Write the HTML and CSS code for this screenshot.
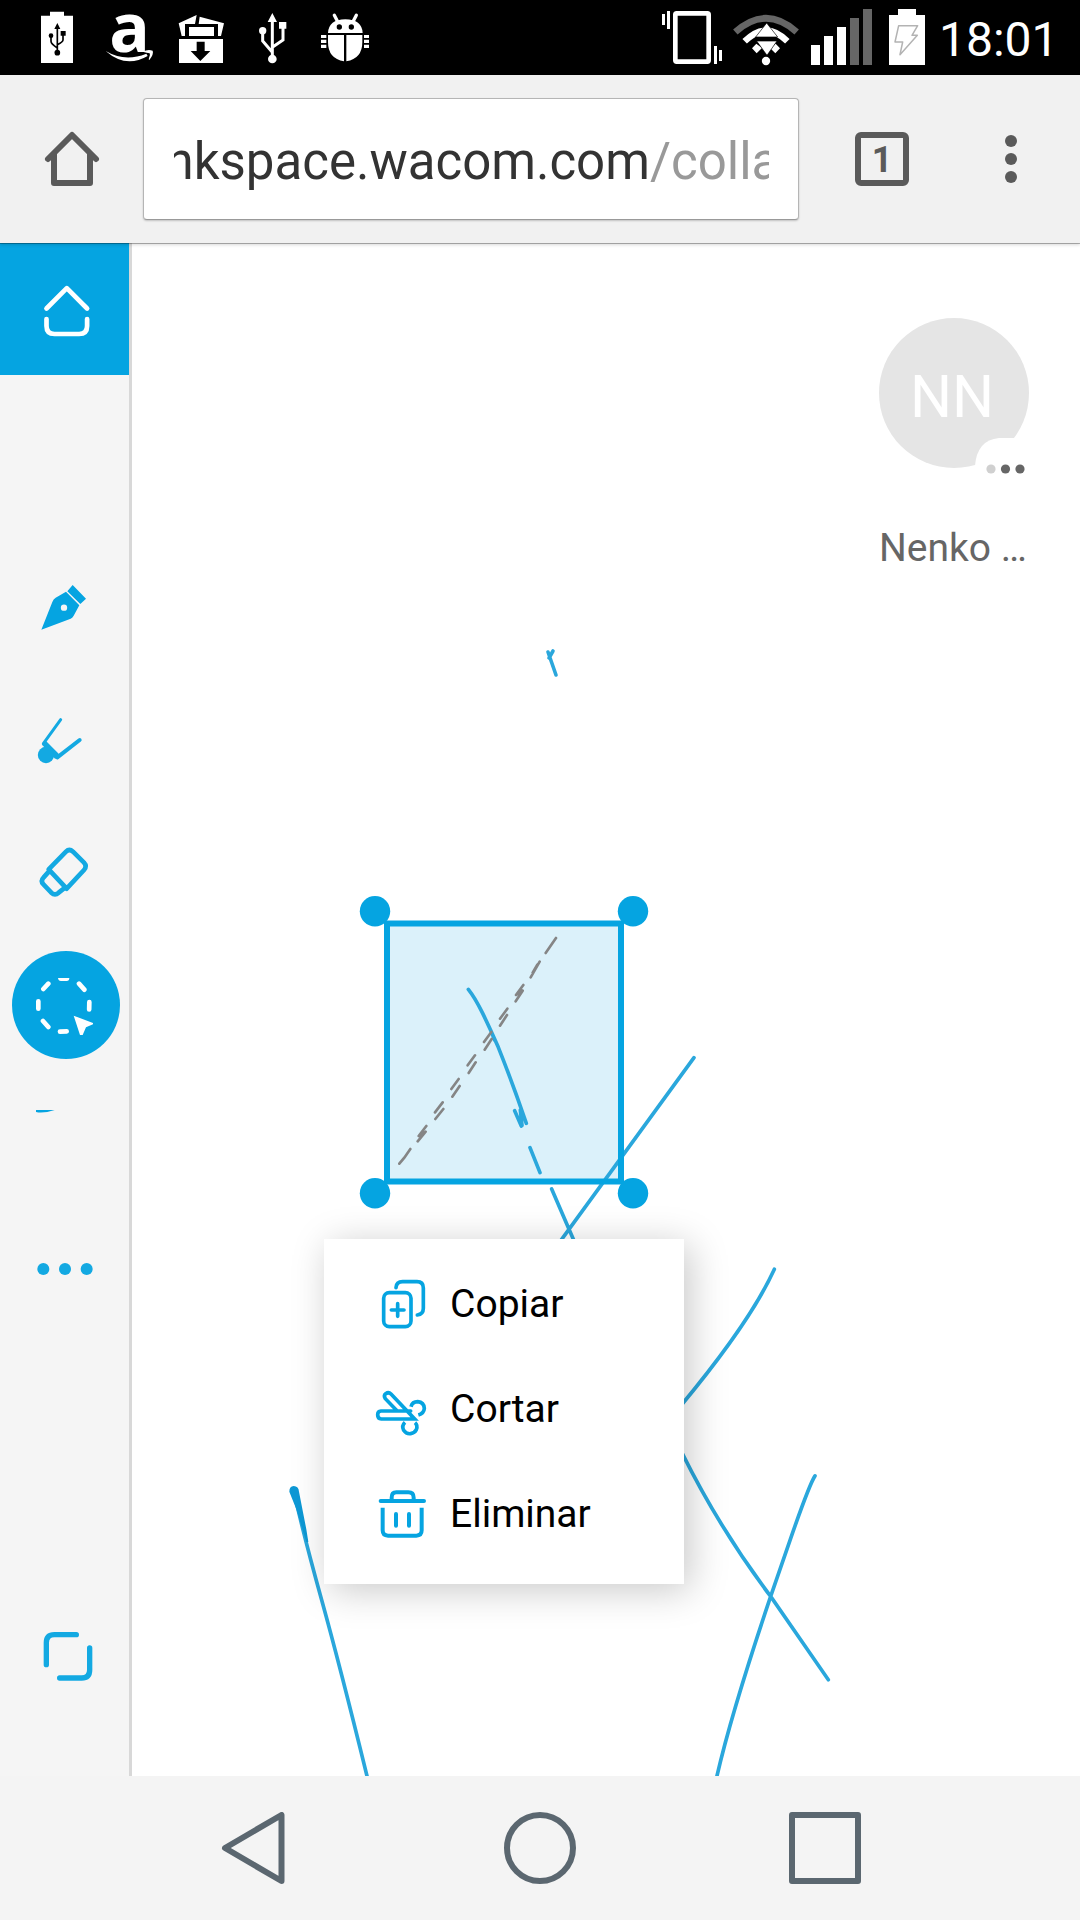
FILE: index.html
```html
<!DOCTYPE html>
<html lang="es">
<head>
<meta charset="utf-8">
<title>Inkspace</title>
<link rel="stylesheet" href="styles.css">
</head>
<body>
<div class="phone">
  <header class="status">
    <div class="status-left">
      <svg width="54" height="75" viewBox="108 0 162 225"><path fill="#fff" d="M123 47h27V35h42v12h27v142h-96z"/><g stroke="#000" stroke-width="5" fill="none"><path d="M172 85v75M153 110v14q0 8 19 20M189 104v16q0 6-17 14"/></g><path d="M172 69l9 18h-18zM182 93h15v14h-15z"/><circle cx="153" cy="107" r="7"/><circle cx="172" cy="158" r="8.500"/></svg>
      <svg width="75" height="75" viewBox="270 0 225 225"><text class="logo-letter" x="328" y="155">a</text><path fill="#fff" d="M317 153q57 34 122 8l4 7q-66 38-126-15zM428 155q16-8 30-3 4 10-10 28-3 0-1-6 5-8 2-14-8-2-21-5z"/></svg>
      <svg width="75" height="75" viewBox="495 0 225 225" fill="#fff"><path d="M537 117h132v72H537z"/><path d="M536 70l54-25-5 27h-30v36h-10zM599 50l73 20-9 38h-9V72h-58zM567 81h75v27h-75z"/><path fill="#000" d="M590 125h24v28h17l-30 30-29-30h18z"/></svg>
      <svg width="65" height="75" viewBox="720 0 195 225"><g stroke="#fff" stroke-width="9" fill="none"><path d="M817 58v120M788 95v28l29 34M849 80v40l-32 22"/></g><g fill="#fff"><path d="M817 39l14 27h-28zM837 66h22v20h-22z"/><circle cx="788" cy="92" r="11"/><circle cx="817" cy="177" r="13"/></g></svg>
      <svg width="75" height="75" viewBox="915 0 225 225"><g fill="#fff"><path d="M984 99q2-40 52-41 50 1 52 41zM984 105h48v79q-48-8-48-58zM1039 105h48v21q0 50-48 58zM963 105h16v9h-16zM963 119h16v10h-16zM963 134h16v10h-16zM1092 105h15v9h-15zM1092 119h15v10h-15zM1092 134h15v10h-15z"/></g><path d="M1003 46l9 17M1069 46l-9 17" stroke="#fff" stroke-width="10" stroke-linecap="round"/><circle cx="1018" cy="81" r="8"/><circle cx="1054" cy="81" r="8"/></svg>
    </div>
    <div class="status-right">
      <svg width="72" height="75" viewBox="45 0 216 225"><rect x="106" y="40" width="100" height="145" rx="4" fill="none" stroke="#fff" stroke-width="14"/><path fill="#fff" d="M66 42h9v33h-9zM81 33h9v54h-9zM222 138h9v54h-9zM237 150h9v33h-9z"/></svg>
      <svg width="78" height="75" viewBox="261 0 234 225"><path d="M286 96q92-82 184 0" fill="none" stroke="#666" stroke-width="20"/><path d="M314 124q64-64 128 0" fill="none" stroke="#fff" stroke-width="19"/><g fill="#fff"><path d="M336 145l13-14 17 13-16 16zM420 145l-13-14-17 13 16 16z"/><circle cx="378" cy="183" r="12.500"/></g><path d="M380 69l33 42h-66zM350 123h61l-30 43z" fill="#fff" stroke="#000" stroke-width="2"/></svg>
      <svg width="75" height="75" viewBox="495 0 225 225"><path fill="#fff" d="M513 135h27v60h-27zM552 108h27v87h-27zM591 81h27v114h-27z"/><path fill="#666" d="M630 54h27v141h-27zM669 27h27v168h-27z"/></svg>
      <svg width="57" height="75" viewBox="720 0 171 225"><path fill="#fff" d="M747 45h27V27h54v18h27v150H747z"/><path d="M776 77h57l-17 29h16l-52 58 8-38h-23z" fill="none" stroke="#b3b3b3" stroke-width="4.500" stroke-linejoin="round"/></svg>
      <span class="clock">18:01</span>
    </div>
  </header>

  <div class="toolbar">
    <svg class="home" width="60" height="60" viewBox="42 129 60 60" fill="none" stroke="#5a5a5a" stroke-width="6" stroke-linecap="round" stroke-linejoin="round"><path d="M48 159l24-24 24 24M54 154v29h36v-29"/></svg>
    <div class="omnibox"><div class="url"><span class="url-text">nkspace.wacom.com<span class="url-path">/colla</span></span></div></div>
    <div class="tabs">1</div>
    <svg class="kebab" width="12" height="48" viewBox="0 0 12 48" fill="#5a5a5a"><circle cx="6" cy="6" r="6"/><circle cx="6" cy="24" r="6"/><circle cx="6" cy="42" r="6"/></svg>
  </div>

  <main class="workspace">
    <aside class="sidebar">
      <div class="home-tile"><svg width="129" height="132" viewBox="0 243 129 132" fill="none" stroke="#fff" stroke-width="4.700" stroke-linecap="round" stroke-linejoin="round"><path d="M46.500 308.500l20.300-20.300 20.300 20.300M46.500 319v7q0 8 8 8h24.600q8 0 8-8v-7"/></svg></div>
      <div class="tools">
        <svg width="129" height="132" viewBox="0 -57 387 396"><path fill="#05a4e1" d="M124 209l33-83q3-9 10-13l31-18 40 41-17 31q-3 6-9 9zM202 94l16-19 40 41-17 16z"/><circle cx="192" cy="143" r="9.500" fill="#f5f5f5"/></svg>
        <svg width="129" height="132" viewBox="0 339 387 396"><g stroke="#13a9e2" stroke-linecap="round" stroke-linejoin="round" fill="none"><path stroke-width="9" d="M182 479l-52 72"/><path stroke-width="12" d="M172 592l67-52"/></g><path fill="#13a9e2" d="M126 554l12-11 38 38 1 14-12 1z"/><circle cx="138" cy="585" r="24.500" fill="#13a9e2"/></svg>
        <svg width="129" height="132" viewBox="0 735 387 396"><g fill="none" stroke="#13a9e2" stroke-width="14" stroke-linejoin="round"><path d="M146 928l52-53q10-10 21 0l33 33q10 11 0 22l-52 56zM149 932l-18 20q-11 11 0 22l23 24q11 10 22 0l19-15"/></g></svg>
        <svg width="129" height="132" viewBox="0 21 387 396"><circle cx="198" cy="225" r="162" fill="#05a4e1"/><g stroke="#fff" stroke-width="14" stroke-linecap="round" fill="none"><path d="M115 214v22M268 216l-.500 22M237 161l16 18M145 161l-15 16M129 273l16 18M180 305l20-1"/></g><path fill="#fff" d="M174 144h34q0 9-8 9h-17q-8 0-9-9zM221 257l58 22v4l-21 9-10 23h-8z"/></svg>
        <svg width="129" height="132" viewBox="0 417 387 396"><path fill="#05a4e1" d="M108 540h56q-34 11-56 6z"/></svg>
        <svg width="129" height="132" viewBox="0 813 387 396" fill="#13a9e2"><circle cx="130" cy="1017" r="18"/><circle cx="195" cy="1017" r="18"/><circle cx="260" cy="1017" r="18"/></svg>
      </div>
      <svg class="expand" width="129" height="132" viewBox="0 390 387 396" fill="none" stroke="#13a9e2" stroke-width="16" stroke-linecap="round"><path d="M139 614v-66q0-24 24-24h66M269 564v66q0 24-24 24h-66"/></svg>
    </aside>

    <section class="canvas">
      <svg class="ink" width="948" height="1533" viewBox="132 243 948 1533">
        <rect x="387" y="923.500" width="234" height="258" fill="#dbf1fa"/>
        <g fill="none" stroke="#2aa7dc" stroke-linecap="round">
          <g stroke-width="3.600"><path d="M548 652l8 23M549 658l4-7"/></g>
          <g transform="translate(340 880) scale(.33333)" stroke-width="11">
            <path d="M385 328q20 25 42 70t48 104q43 108 84 228M456 460l8 20M524 692l20 46M541 690l5 46M570 803l30 75M635 927l67 155M1062 533L665 1078"/>
          </g>
          <g transform="translate(660 1240) scale(.33333 .34437)" stroke-width="11">
            <path d="M343 85Q270 240 60 484M66 618Q180 840 332 1035L505 1277M465 685Q448 710 390 872L332 1035Q215 1370 170 1560"/>
          </g>
          <g transform="translate(0 1460) scale(.33333)" stroke-width="11">
            <path d="M881 92Q910 222 965 420T1102 952"/>
            <path stroke="none" fill="#0d98d5" d="M868 95q0-16 13-17 15 1 16 17l22 113 6 38h-6l-30-98z"/>
          </g>
        </g>
        <g transform="translate(340 880) scale(.33333)" stroke="#858585" stroke-width="8" stroke-linecap="round">
          <path d="M648 174l-31 45M599 245l-27 47M592 254l-14 24M550 315l-22 30M548 332l-21 32M543 328l-8 16M502 386l-22 30M501 405l-21 32M454 456l-22 30M455 477l-21 32M405 526l-22 30M407 547l-21 32M356 597l-22 30M359 618l-22 32M308 667l-23 30M310 687l-24 30M259 738l-23 30M257 755l-24 29M250 750l-8 16M211 807l-18 26-15 18" fill="none"/>
        </g>
        <rect x="387" y="923.500" width="234" height="258" fill="none" stroke="#05a4e1" stroke-width="6"/>
        <g fill="#05a4e1"><circle cx="375" cy="911.300" r="15.200"/><circle cx="633" cy="911.300" r="15.200"/><circle cx="375" cy="1193.300" r="15.200"/><circle cx="633" cy="1193.300" r="15.200"/></g>
      </svg>

      <div class="user">
        <div class="avatar"><span>NN</span>
          <svg class="typing" width="56" height="56" viewBox="0 0 56 56"><path fill="#fff" d="M0 28Q2 2 24 0h15l17 20v36H6Q0 40 0 28z"/><circle cx="16" cy="31" r="4.600" fill="#d0d0d0"/><circle cx="30.500" cy="31" r="4.600" fill="#666"/><circle cx="45" cy="31" r="4.600" fill="#666"/></svg>
        </div>
        <div class="user-name">Nenko …</div>
      </div>

      <ul class="menu">
        <li><svg width="60" height="60" viewBox="190 160 180 180" fill="none" stroke="#05a4e1" stroke-width="11" stroke-linecap="round"><rect x="222" y="219" width="82" height="102" rx="17"/><path d="M259 204q1-18 20-18h43q19 0 19 19v61q0 18-18 20M264 252v38M245 271h38"/></svg><span>Copiar</span></li>
        <li><svg width="60" height="60" viewBox="190 475 180 180" fill="none" stroke="#05a4e1" stroke-width="11" stroke-linecap="round"><path d="M303 574h-89q-10 1-10 11 0 12 11 13h100l-71-75q-7-7-16-1-7 6-1 15l35 36"/><g stroke-linecap="butt"><path d="M304 561q4-15 20-15 19 2 20 20-1 15-18 20M286 608q-11 10-4 24 8 12 21 10 12-2 17-12 5-13-4-21"/></g></svg><span>Cortar</span></li>
        <li><svg width="60" height="60" viewBox="190 790 180 180" fill="none" stroke="#05a4e1" stroke-width="12"><path stroke-linecap="round" d="M213 844h130M259 883v35M298 883v35"/><path d="M246 841v-7q0-16 14-16h36q16 0 16 16v7M219 864v68q0 16 16 16h85q16 0 16-16v-68"/></svg><span>Eliminar</span></li>
      </ul>
    </section>
  </main>

  <nav class="navbar">
    <svg width="72" height="72" viewBox="0 0 72 72"><path d="M62.500 3v66L6 36z"/></svg>
    <svg width="72" height="72" viewBox="0 0 72 72"><circle cx="36" cy="36" r="33"/></svg>
    <svg width="72" height="72" viewBox="0 0 72 72"><rect x="3" y="3" width="66" height="66"/></svg>
  </nav>
</div>
</body>
</html>
```

FILE: styles.css
```css
* { box-sizing: border-box; }
body { margin: 0; font-family: Roboto, "Liberation Sans", sans-serif; }
svg { display: block; flex: none; }

.phone {
  display: flex;
  flex-direction: column;
  width: 1080px;
  height: 1920px;
  overflow: hidden;
  background: #fff;
}

.status {
  display: flex;
  justify-content: space-between;
  height: 75px;
  padding: 0 25px 0 36px;
  background: #000;
  color: #fff;
}
.status-left, .status-right { display: flex; }
.logo-letter { font: 700 202px "Open Sans", sans-serif; fill: #fff; }
.clock { width: 118px; padding-left: 2px; font-size: 48px; line-height: 80px; white-space: nowrap; }

.toolbar {
  position: relative;
  z-index: 1;
  display: flex;
  align-items: center;
  height: 168px;
  padding-left: 42px;
  background: #f1f1f1;
  box-shadow: 0 1px 0 rgba(0, 0, 0, .28), 0 2px 3px rgba(0, 0, 0, .15);
}
.omnibox {
  width: 656px;
  height: 122px;
  margin: 0 56px 0 41px;
  padding: 0 29px 0 30px;
  border: 1px solid #b5b5b5;
  border-bottom-color: #999;
  border-radius: 4px;
  background: #fff;
  box-shadow: 0 1px 2px rgba(0, 0, 0, .2);
}
.url { height: 120px; overflow: hidden; white-space: nowrap; font-size: 51px; line-height: 126px; color: #333; }
.url-text { margin-left: -8.500px; }
.url-path { color: #999; }
.tabs {
  width: 54px;
  height: 54px;
  border: 6px solid #5a5a5a;
  border-radius: 6px;
  color: #5a5a5a;
  font-size: 36px;
  font-weight: 700;
  line-height: 45px;
  text-align: center;
}
.kebab { margin-left: 96px; }

.workspace { display: flex; height: 1533px; }
.sidebar { width: 132px; background: #f5f5f5; border-right: 3px solid #d8d8d8; }
.home-tile { height: 132px; background: #05a4e1; }
.tools { margin-top: 166px; }
.expand { margin-top: 257px; }

.canvas { position: relative; flex: 1; background: #fff; }
.ink { position: absolute; inset: 0; }
.user {
  display: flex;
  flex-direction: column;
  margin: 75px 0 0 747px;
  width: 160px;
}
.avatar {
  position: relative;
  width: 150px;
  height: 150px;
  border-radius: 50%;
  background: #e5e5e5;
  color: #fff;
  font-size: 59px;
  line-height: 158px;
  text-align: center;
}
.avatar span { margin-left: -4px; }
.typing { position: absolute; left: 96px; top: 120px; }
.user-name { margin-top: 57px; color: #666; font-size: 39px; line-height: 46px; }

.menu {
  position: absolute;
  left: 192px;
  top: 996px;
  width: 360px;
  height: 345px;
  margin: 0;
  padding: 34px 0 0 49px;
  list-style: none;
  background: #fff;
  box-shadow: 6px 6px 36px rgba(0, 0, 0, .22);
}
.menu li {
  display: flex;
  align-items: center;
  gap: 17px;
  height: 60px;
  margin-bottom: 45px;
  font-size: 39px;
  color: #000;
}
.menu span { padding-top: 2px; }

.navbar {
  display: flex;
  justify-content: space-between;
  height: 144px;
  padding: 36px 219px 0 219px;
  background: #f4f4f4;
}
.navbar svg { fill: none; stroke: #5b6770; stroke-width: 6px; stroke-linejoin: round; }
```
